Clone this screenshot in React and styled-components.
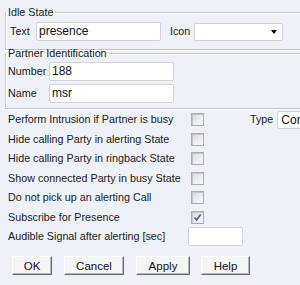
import React from "react";
import styled, { createGlobalStyle } from "styled-components";

const GlobalStyle = createGlobalStyle`
  html, body { margin: 0; padding: 0; background: #eef2f8; }
  body {
    font-family: "Liberation Sans", Arial, sans-serif;
    font-size: 10.75px;
    color: #1a1a1a;
    overflow: hidden;
  }
  * { box-sizing: border-box; }
`;

const Page = styled.div`
  width: 300px;
  height: 285px;
  overflow: hidden;
  padding-top: 6px;
`;

const Group = styled.fieldset`
  margin: ${(p) => p.$mt || 0}px 0 0 5px;
  width: 330px;
  min-width: 0;
  padding: ${(p) => p.$pt}px 0 ${(p) => p.$pb}px 0;
  border: 1px solid #c3c7cf;
  box-shadow: inset 1px 1px 0 #ffffff, 1px 1px 0 #ffffff;
`;

const Legend = styled.legend`
  padding: 0 2px;
  line-height: 13px;
  height: 13px;
  font-size: 10.75px;
  color: #1a1a1a;
`;

const FieldRow = styled.div`
  display: flex;
  align-items: center;
  padding-left: ${(p) => p.$pl}px;
  margin-top: ${(p) => p.$mt || 0}px;
`;

const Label = styled.span`
  display: inline-block;
  width: ${(p) => p.$w}px;
  margin-left: ${(p) => p.$ml || 0}px;
  white-space: nowrap;
  line-height: 13px;
`;

const TextBox = styled.div`
  width: ${(p) => p.$w}px;
  height: ${(p) => p.$h || 19}px;
  background: #ffffff;
  border: 1px solid #cfd3da;
  border-radius: 2px;
  font-size: 12px;
  line-height: ${(p) => (p.$h || 19) - 2}px;
  padding-left: 2px;
  color: #111;
  white-space: nowrap;
  overflow: hidden;
`;

const SelectBox = styled.div`
  display: flex;
  align-items: center;
  justify-content: space-between;
  width: ${(p) => p.$w}px;
  height: ${(p) => p.$h}px;
  background: #ffffff;
  border: 1px solid #cfd3da;
  border-radius: 2px;
  font-size: 12px;
  padding: 0 5px 0 3px;
  color: #111;
  white-space: nowrap;
  overflow: hidden;
  flex-shrink: 0;
`;

const Arrow = styled.span`
  width: 0;
  height: 0;
  border-left: 3.5px solid transparent;
  border-right: 3.5px solid transparent;
  border-top: 4px solid #000;
`;

const Options = styled.div`
  margin-top: 1px;
  padding-left: 8px;
  display: grid;
  grid-auto-rows: 19.5px;
`;

const OptRow = styled.div`
  display: grid;
  grid-template-columns: ${(p) => p.$lw}px auto auto auto;
  align-items: center;
`;

const Check = styled.span`
  display: flex;
  align-items: center;
  justify-content: center;
  width: 13px;
  height: 13px;
  border: 1px solid #a9acb2;
  background: linear-gradient(135deg, #d6d8dc 0%, #eceef0 60%, #f6f7f8 100%);
  box-shadow: inset 1px 1px 0 #c4c6ca;
`;

const Tick = styled.svg`
  width: 9px;
  height: 9px;
`;

const TypeSel = styled(SelectBox)`
  margin-left: 4px;
  width: 40px;
`;

const Buttons = styled.div`
  display: flex;
  margin-top: 9.5px;
  padding-left: 12px;
  gap: 12px;
`;

const Button = styled.button`
  width: ${(p) => p.$w}px;
  height: 19px;
  padding: 0;
  font-family: "Liberation Sans", Arial, sans-serif;
  font-size: 11.5px;
  color: #111;
  background: #f4f5f7;
  border-top: 1px solid #ffffff;
  border-left: 1px solid #ffffff;
  border-right: 1px solid #6a6a6a;
  border-bottom: 1px solid #6a6a6a;
  box-shadow: inset -1px -1px 0 #b4b6ba;
  margin-left: ${(p) => p.$ml || 0}px;
`;

const options = [
  { label: "Perform Intrusion if Partner is busy", checked: false, type: true },
  { label: "Hide calling Party in alerting State", checked: false },
  { label: "Hide calling Party in ringback State", checked: false },
  { label: "Show connected Party in busy State", checked: false },
  { label: "Do not pick up an alerting Call", checked: false },
  { label: "Subscribe for Presence", checked: true },
];

export default function App() {
  return (
    <Page>
      <GlobalStyle />
      <Group $pt={3} $pb={8}>
        <Legend>Idle State</Legend>
        <FieldRow $pl={4}>
          <Label $w={26}>Text</Label>
          <TextBox $w={125}>presence</TextBox>
          <Label $w={24} $ml={9}>Icon</Label>
          <SelectBox $w={89} $h={18}>
            <span />
            <Arrow />
          </SelectBox>
        </FieldRow>
      </Group>
      <Group $mt={-3} $pt={2} $pb={5}>
        <Legend>Partner Identification</Legend>
        <FieldRow $pl={2}>
          <Label $w={41}>Number</Label>
          <TextBox $w={125}>188</TextBox>
        </FieldRow>
        <FieldRow $pl={2} $mt={3}>
          <Label $w={41}>Name</Label>
          <TextBox $w={125}>msr</TextBox>
        </FieldRow>
      </Group>
      <Options>
        {options.map((o) => (
          <OptRow key={o.label} $lw={183}>
            <Label>{o.label}</Label>
            <Check>
              {o.checked && (
                <Tick viewBox="0 0 9 9">
                  <path d="M1.5 4.5 L3.6 7 L7.6 1.5" fill="none" stroke="#3d5c9e" strokeWidth="1.5" />
                </Tick>
              )}
            </Check>
            {o.type && <Label $ml={46}>Type</Label>}
            {o.type && <TypeSel $w={40} $h={18}>Con</TypeSel>}
          </OptRow>
        ))}
        <OptRow $lw={180}>
          <Label>Audible Signal after alerting [sec]</Label>
          <TextBox $w={55} />
        </OptRow>
      </Options>
      <Buttons>
        <Button $w={40}>OK</Button>
        <Button $w={60}>Cancel</Button>
        <Button $w={54}>Apply</Button>
        <Button $w={49} $ml={-1}>Help</Button>
      </Buttons>
    </Page>
  );
}
